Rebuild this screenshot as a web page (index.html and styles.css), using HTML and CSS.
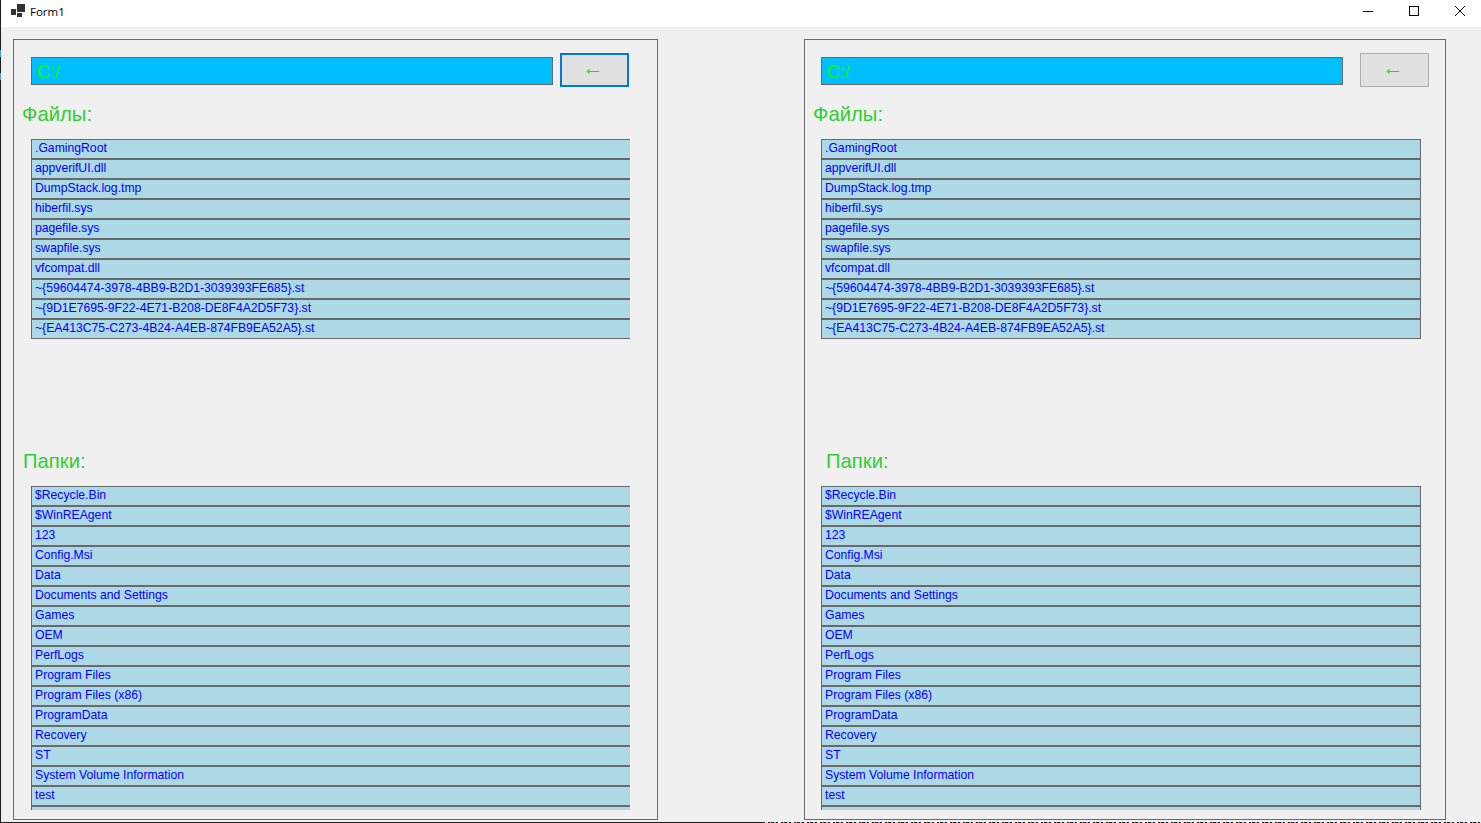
FILE: index.html
```html
<!DOCTYPE html>
<html lang="en">
<head>
    <meta charset="UTF-8">
    <meta name="viewport" content="width=device-width, initial-scale=1.0">
    <title>Form1</title>
    <link rel="stylesheet" href="styles.css">
</head>
<body>
    <div class="window">
        <!-- Title bar -->
        <div class="titlebar">
            <svg class="app-icon" width="16" height="16" viewBox="0 0 16 16">
                <rect x="0" y="5" width="5" height="6" fill="#333"/>
                <rect x="6" y="0" width="8" height="8" fill="#333"/>
                <rect x="6" y="9" width="5" height="4" fill="#333"/>
            </svg>
            <span class="title">Form1</span>
            <div class="controls">
                <svg width="46" height="22" viewBox="0 0 46 22"><path d="M20 11.5h10" stroke="#000" fill="none"/></svg>
                <svg width="46" height="22" viewBox="0 0 46 22"><rect x="20.5" y="6.5" width="9" height="9" stroke="#000" fill="none"/></svg>
                <svg width="46" height="22" viewBox="0 0 46 22"><path d="M20 6l10 10M30 6L20 16" stroke="#000" fill="none"/></svg>
            </div>
        </div>

        <div class="content">
            <!-- Left panel -->
            <section class="panel panel-left">
                <div class="pathrow">
                    <div class="path">C:/</div>
                    <button class="back back-focus">←</button>
                </div>
                <div class="label">Файлы:</div>
                <ul class="list list-files">
                    <li>.GamingRoot</li>
                    <li>appverifUI.dll</li>
                    <li>DumpStack.log.tmp</li>
                    <li>hiberfil.sys</li>
                    <li>pagefile.sys</li>
                    <li>swapfile.sys</li>
                    <li>vfcompat.dll</li>
                    <li>~{59604474-3978-4BB9-B2D1-3039393FE685}.st</li>
                    <li>~{9D1E7695-9F22-4E71-B208-DE8F4A2D5F73}.st</li>
                    <li>~{EA413C75-C273-4B24-A4EB-874FB9EA52A5}.st</li>
                </ul>
                <div class="label label-folders">Папки:</div>
                <ul class="list list-folders">
                    <li>$Recycle.Bin</li>
                    <li>$WinREAgent</li>
                    <li>123</li>
                    <li>Config.Msi</li>
                    <li>Data</li>
                    <li>Documents and Settings</li>
                    <li>Games</li>
                    <li>OEM</li>
                    <li>PerfLogs</li>
                    <li>Program Files</li>
                    <li>Program Files (x86)</li>
                    <li>ProgramData</li>
                    <li>Recovery</li>
                    <li>ST</li>
                    <li>System Volume Information</li>
                    <li>test</li>
                    <li></li>
                </ul>
            </section>

            <!-- Right panel -->
            <section class="panel panel-right">
                <div class="pathrow">
                    <div class="path">C:/</div>
                    <button class="back">←</button>
                </div>
                <div class="label">Файлы:</div>
                <ul class="list list-files">
                    <li>.GamingRoot</li>
                    <li>appverifUI.dll</li>
                    <li>DumpStack.log.tmp</li>
                    <li>hiberfil.sys</li>
                    <li>pagefile.sys</li>
                    <li>swapfile.sys</li>
                    <li>vfcompat.dll</li>
                    <li>~{59604474-3978-4BB9-B2D1-3039393FE685}.st</li>
                    <li>~{9D1E7695-9F22-4E71-B208-DE8F4A2D5F73}.st</li>
                    <li>~{EA413C75-C273-4B24-A4EB-874FB9EA52A5}.st</li>
                </ul>
                <div class="label label-folders">Папки:</div>
                <ul class="list list-folders">
                    <li>$Recycle.Bin</li>
                    <li>$WinREAgent</li>
                    <li>123</li>
                    <li>Config.Msi</li>
                    <li>Data</li>
                    <li>Documents and Settings</li>
                    <li>Games</li>
                    <li>OEM</li>
                    <li>PerfLogs</li>
                    <li>Program Files</li>
                    <li>Program Files (x86)</li>
                    <li>ProgramData</li>
                    <li>Recovery</li>
                    <li>ST</li>
                    <li>System Volume Information</li>
                    <li>test</li>
                    <li></li>
                </ul>
            </section>
        </div>
    </div>
</body>
</html>
```

FILE: styles.css
```css
html, body {
    margin: 0;
    height: 100%;
    overflow: hidden;
}
/* desktop showing around the window: taskbar row at the bottom, icons down the left edge */
body {
    background-color: #1e1e1e;
    background-image:
        repeating-linear-gradient(90deg, #e8e8e8 0 3px, #1e1e1e 3px 5px, #b9a98e 5px 6px, #1e1e1e 6px 9px, #9fb6d0 9px 11px, #1e1e1e 11px 13px),
        linear-gradient(#1e1e1e 50px, #4a9cc8 50px 57px, #1e1e1e 57px 73px, #4a9cc8 73px 80px, #1e1e1e 80px);
    background-repeat: no-repeat;
    background-size: 716px 1px, 1px 100%;
    background-position: 765px 822px, 0 0;
}
.window {
    height: 822px;
    margin-left: 1px;
    background: #f0f0f0;
    font-family: "Liberation Sans", Arial, sans-serif;
}
.titlebar {
    height: 27px;
    background: #fff;
    display: flex;
    align-items: center;
    box-sizing: border-box;
    padding-left: 10px;
}
.app-icon {
    margin-top: -4px;
}
.title {
    font-family: "Open Sans", sans-serif;
    font-size: 11.5px;
    color: #000;
    margin-left: 3px;
    margin-top: -4px;
}
.controls {
    margin-left: auto;
    display: flex;
    margin-top: -5px;
}
.content {
    display: flex;
    padding: 12px 0 0 12px;
    gap: 146px;
}
.panel {
    box-sizing: border-box;
    height: 781px;
    border: 1px solid #696969;
    padding: 13px 0 0 17px;
    overflow: hidden;
}
.panel-left {
    width: 645px;
}
.panel-right {
    width: 642px;
    padding-left: 16px;
}
.pathrow {
    display: flex;
    align-items: center;
    height: 34px;
}
.path {
    box-sizing: border-box;
    width: 522px;
    height: 28px;
    margin-top: 2px;
    background: #00bfff;
    border: 1px solid #696969;
    color: #00ff00;
    font-size: 18px;
    line-height: 28px;
    padding-left: 5px;
}
.back {
    width: 69px;
    height: 34px;
    margin-left: 7px;
    padding: 0 3px 5px 0;
    background: #e1e1e1;
    border: 1px solid #adadad;
    color: #32cd32;
    font-family: "Liberation Sans", Arial, sans-serif;
    font-size: 21px;
    line-height: 20px;
}
.panel-right .back {
    margin-left: 17px;
}
.back-focus {
    border: 2px solid #0078d7;
}
.label {
    color: #32cd32;
    font-size: 20.3px;
    line-height: 24px;
    margin: 15px 0 0 -9px;
}
.panel-right .label {
    margin-left: -8px;
}
.panel-left .label-folders {
    margin: 0 0 0 -8px;
}
.panel-right .label-folders {
    margin: 0 0 0 5px;
}
.list {
    list-style: none;
    margin: 13px 0 0 0;
    padding: 0;
    background: #add8e6;
    overflow: hidden;
}
.panel-left .list {
    width: 599px;
}
.panel-right .list {
    width: 600px;
}
.list li {
    box-sizing: border-box;
    height: 20px;
    border: 1px solid #696969;
    background: #add8e6;
    color: #0000ff;
    font-size: 12.2px;
    line-height: 16px;
    padding-left: 3px;
}
.panel-left .list li {
    border-right: 0;
}
.list-files {
    height: 200px;
    margin-bottom: 110px;
}
.list-folders {
    height: 324px;
}
```
